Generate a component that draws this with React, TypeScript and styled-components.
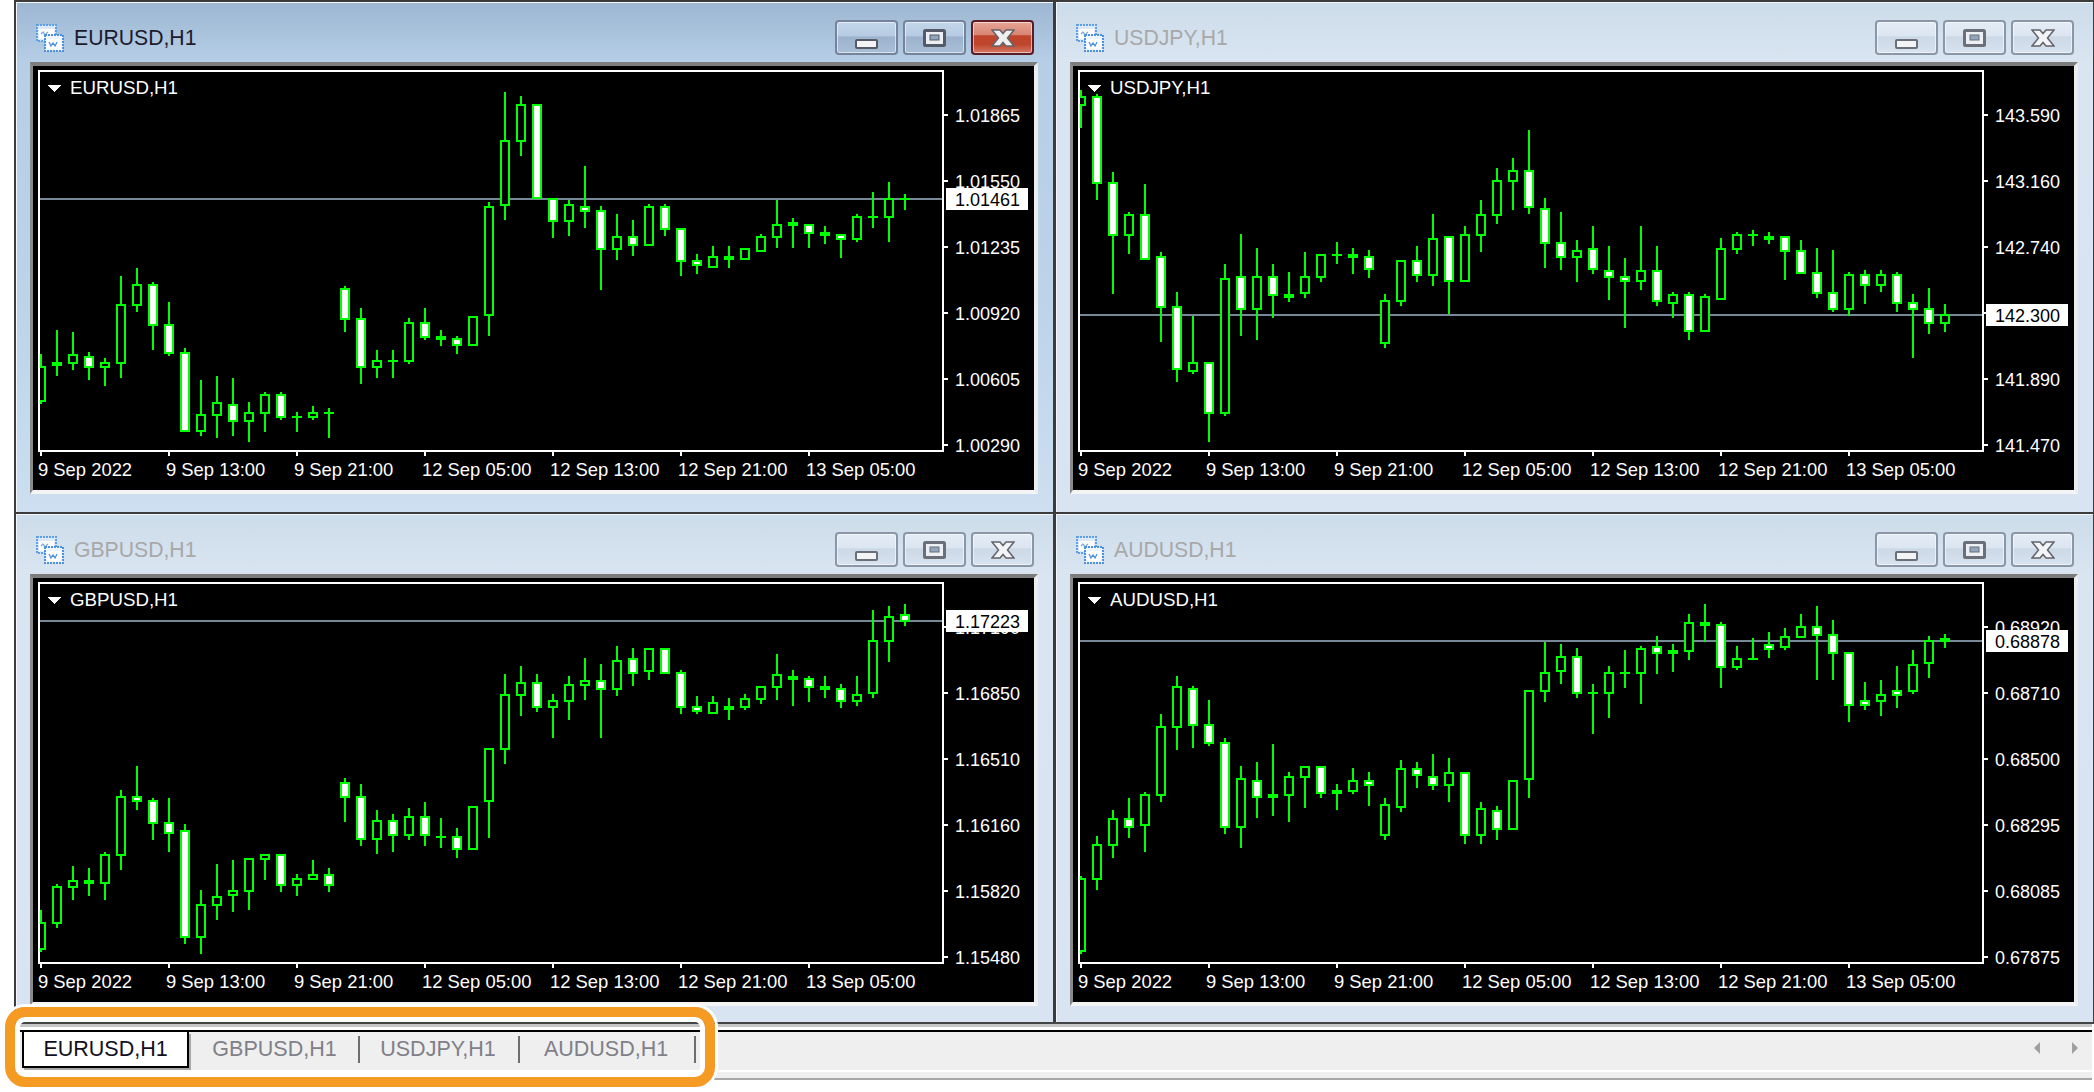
import { FC } from "react";
import styled, { createGlobalStyle } from "styled-components";

const GlobalStyle = createGlobalStyle`
  html, body {
    margin: 0;
    background: #fff;
    overflow: hidden;
  }
`;

// [wick top, body top, body bottom, wick bottom, bearish] in thirds of a pixel
type Candle = number[];

const EURUSD: Candle[] = [
  [882,918,1026,1032,0],[810,906,918,948,0],[816,882,912,930,0],[876,888,924,960,1],[894,906,924,978,0],
  [648,732,912,954,0],[624,672,738,756,0],[666,672,798,870,1],[726,792,882,888,1],[864,876,1116,1116,1],
  [960,1062,1116,1128,0],[948,1026,1068,1134,0],[954,1032,1086,1128,1],[1026,1056,1086,1146,0],[996,1002,1062,1116,0],
  [996,1002,1074,1080,1],[1056,1068,1074,1116,0],[1038,1056,1074,1080,0],[1044,1056,1062,1134,0],[678,684,780,816,1],
  [744,774,924,972,1],[870,900,924,954,0],[870,900,906,954,0],[774,786,906,912,0],[744,786,834,840,1],
  [810,828,840,858,0],[828,834,858,882,1],[768,768,858,858,0],[426,438,768,828,0],[96,240,438,480,0],
  [108,132,246,288,0],[132,132,418,418,1],[414,414,486,534,1],[420,432,486,528,0],[318,438,456,504,1],
  [438,450,570,690,1],[462,528,570,600,0],[480,528,558,588,1],[432,438,558,558,0],[432,438,510,528,1],
  [504,504,606,648,1],[582,600,618,642,1],[558,588,624,624,0],[558,588,600,624,0],[564,564,600,600,0],
  [522,528,576,576,0],[420,492,534,564,0],[474,486,498,564,0],[492,492,522,564,1],[498,516,528,552,0],
  [522,522,540,594,1],[462,468,540,546,0],[396,468,474,504,0],[366,414,474,546,0],[402,414,420,450,0],
];

const USDJPY: Candle[] = [
  [90,108,138,204,0],[102,108,372,420,1],[336,366,528,702,1],[456,462,528,582,0],[372,462,600,600,1],
  [576,588,744,846,1],[696,738,930,966,1],[768,906,936,942,0],[906,906,1062,1146,1],[612,654,1062,1068,0],
  [522,648,750,828,1],[564,648,750,840,0],[612,648,708,774,1],[636,702,714,726,0],[576,648,702,714,0],
  [582,582,654,666,0],[546,582,588,612,0],[564,582,594,642,0],[570,588,630,654,1],[702,720,852,864,0],
  [600,600,726,738,0],[558,600,648,666,1],[462,534,648,678,0],[528,528,666,762,1],[498,522,666,666,0],
  [420,462,528,576,0],[324,360,468,492,0],[294,330,366,450,0],[210,330,444,462,1],[414,444,552,624,1],
  [456,546,594,630,1],[540,570,594,666,0],[498,564,630,642,1],[558,630,654,720,1],[594,648,666,804,1],
  [498,630,666,690,0],[558,630,726,738,1],[696,702,732,774,0],[696,702,816,840,1],[702,708,816,816,0],
  [534,564,720,720,0],[516,522,570,582,0],[510,522,528,558,0],[516,528,540,552,0],[528,528,576,660,1],
  [540,570,642,642,1],[564,636,702,714,1],[570,696,750,756,1],[636,642,750,768,0],[630,642,678,732,1],
  [630,642,678,696,0],[636,642,732,756,1],[702,726,750,894,1],[684,744,792,822,1],[732,762,792,816,0],
];

const GBPUSD: Candle[] = [
  [1020,1056,1140,1146,0],[942,948,1062,1074,0],[888,930,954,990,0],[894,930,942,978,0],[846,852,942,990,0],
  [660,678,858,900,0],[588,678,696,720,1],[684,690,762,810,1],[684,756,792,846,1],[762,780,1104,1122,1],
  [960,1002,1104,1152,0],[882,978,1008,1050,0],[870,960,978,1026,0],[864,864,966,1020,0],[852,852,870,930,0],
  [852,852,948,966,1],[912,924,948,978,0],[870,912,930,930,0],[894,912,948,966,1],[624,636,684,756,1],
  [642,678,810,828,1],[720,750,810,852,0],[732,750,798,846,1],[714,738,798,810,0],[696,738,798,828,1],
  [744,798,804,834,0],[774,798,840,864,1],[708,708,840,840,0],[534,534,696,804,0],[312,372,540,582,0],
  [288,336,378,438,0],[312,336,414,426,1],[372,390,414,504,0],[318,342,396,450,0],[264,330,348,390,0],
  [282,330,360,504,1],[228,270,360,378,0],[234,264,312,348,1],[234,234,306,330,0],[234,234,312,312,1],
  [300,306,414,432,1],[378,408,426,432,1],[378,396,432,432,0],[384,408,420,450,0],[372,384,414,420,0],
  [348,348,390,402,0],[252,312,354,390,0],[300,318,330,408,0],[318,324,354,396,1],[318,348,360,384,0],
  [342,354,396,414,1],[318,372,396,408,0],[120,210,372,384,0],[108,138,216,276,0],[102,132,156,168,1],
];

const AUDUSD: Candle[] = [
  [918,924,1146,1152,0],[798,822,930,960,0],[720,744,828,864,0],[684,744,774,804,1],[666,672,768,846,0],
  [432,468,678,696,0],[318,348,474,540,0],[348,354,468,534,1],[390,462,522,528,1],[504,516,774,792,1],
  [588,624,774,834,0],[576,630,684,744,1],[522,672,684,738,0],[606,618,678,756,0],[588,588,624,714,0],
  [588,588,672,684,1],[642,660,672,720,0],[594,630,666,672,0],[606,630,648,708,1],[684,702,798,810,0],
  [570,594,714,726,0],[576,594,618,654,1],[552,618,648,660,1],[564,606,648,696,0],[606,606,798,822,1],
  [696,714,798,822,0],[708,720,780,810,1],[630,630,780,780,0],[360,360,630,684,0],[216,306,366,396,0],
  [222,258,306,342,0],[234,258,372,384,1],[342,366,372,492,0],[288,306,372,444,0],[240,306,312,354,0],
  [228,234,312,402,0],[198,228,252,312,1],[222,240,252,306,0],[132,156,246,270,0],[102,156,168,216,0],
  [156,162,294,354,1],[228,264,294,300,0],[204,264,270,270,0],[186,222,240,264,1],[174,198,234,240,0],
  [132,168,204,204,0],[108,168,198,330,1],[150,192,252,330,1],[246,246,408,456,1],[336,390,408,420,1],
  [330,372,396,438,0],[288,360,378,414,1],[240,282,366,372,0],[198,210,282,324,0],[192,204,216,234,0],
];

const DATES = ["9 Sep 2022", "9 Sep 13:00", "9 Sep 21:00", "12 Sep 05:00", "12 Sep 13:00", "12 Sep 21:00", "13 Sep 05:00"];
const TICK_Y = [49, 115, 181, 247, 313, 379];

const CHARTS = [
  { symbol: "EURUSD,H1", active: true, candles: EURUSD, shift: -6, bid: "1.01461", bidY: 133,
    prices: ["1.01865", "1.01550", "1.01235", "1.00920", "1.00605", "1.00290"] },
  { symbol: "USDJPY,H1", active: false, candles: USDJPY, shift: -6, bid: "142.300", bidY: 249,
    prices: ["143.590", "143.160", "142.740", "142.300", "141.890", "141.470"] },
  { symbol: "GBPUSD,H1", active: false, candles: GBPUSD, shift: -8, bid: "1.17223", bidY: 43,
    prices: ["1.17190", "1.16850", "1.16510", "1.16160", "1.15820", "1.15480"] },
  { symbol: "AUDUSD,H1", active: false, candles: AUDUSD, shift: -8, bid: "0.68878", bidY: 63,
    prices: ["0.68920", "0.68710", "0.68500", "0.68295", "0.68085", "0.67875"] },
];

const TABS = [
  { label: "EURUSD,H1", width: 167, nudge: 0, active: true },
  { label: "GBPUSD,H1", width: 171, nudge: 0, active: false },
  { label: "USDJPY,H1", width: 160, nudge: 4, active: false },
  { label: "AUDUSD,H1", width: 176, nudge: 4, active: false },
];

const Page = styled.div`
  position: relative;
  width: 2094px;
  height: 1092px;
  box-sizing: border-box;
  padding-left: 14px;
  background: #fff;
  font-family: "Liberation Sans", Arial, sans-serif;
`;

const MdiArea = styled.div`
  display: grid;
  grid-template-columns: 1040px 1040px;
  grid-template-rows: 512px 510px;
  height: 1024px;
  box-sizing: border-box;
  border-bottom: 2px solid #444;
`;

const ChildWindow = styled.section<{ $active: boolean }>`
  display: flex;
  flex-direction: column;
  box-sizing: border-box;
  border: solid #3c3c3c;
  border-width: 2px 1px 0 2px;
  box-shadow: inset 1px 1px 0 #f4f8fc;
  background: ${(p) =>
    p.$active
      ? "linear-gradient(180deg, #9db7d2 0, #b6cee6 60px, #bcd3ea 300px, #cddff0 510px)"
      : "linear-gradient(180deg, #cddcea 0, #d9e5f1 60px, #d8e4f1 100%)"};
`;

const TitleBar = styled.header`
  display: flex;
  align-items: center;
  box-sizing: border-box;
  height: 60px;
  flex: none;
  padding: 11px 19px 0 19px;
`;

const AppIcon = styled.svg`
  width: 30px;
  height: 30px;
  flex: none;
  margin-right: 9px;
`;

const TitleText = styled.h2<{ $active: boolean }>`
  flex: 1;
  margin: 0;
  font-size: 21.200px;
  font-weight: 400;
  color: ${(p) => (p.$active ? "#1d1a2c" : "#a8a8a8")};
`;

const CaptionButtons = styled.div`
  display: flex;
  gap: 5px;
`;

const CaptionButton = styled.button<{ $active: boolean; $close?: boolean }>`
  display: flex;
  align-items: center;
  justify-content: center;
  width: 63px;
  height: 35px;
  padding: 0;
  border-radius: 4px;
  border: 2px solid ${(p) => (p.$close && p.$active ? "#5c1c26" : p.$active ? "#75849a" : "#8b97a6")};
  box-shadow: inset 0 0 0 1px rgba(255, 255, 255, 0.55);
  background: ${(p) => {
    if (p.$close && p.$active) {
      return "linear-gradient(180deg, #e6a595 0, #d98473 42%, #bf452d 44%, #bf452d 72%, #d47a68 100%)";
    }
    if (p.$active) {
      return "linear-gradient(180deg, #c3d6ea 0, #b6cbe2 45%, #9db3cd 48%, #a9bfd8 100%)";
    }
    return "linear-gradient(180deg, #e4ecf5 0, #dce6f1 45%, #cbd8e6 48%, #d8e3ef 100%)";
  }};
`;

const CaptionGlyph = styled.svg`
  display: block;
`;

const SunkenFrame = styled.div`
  box-sizing: border-box;
  width: 1008px;
  height: 432px;
  margin-left: 14px;
  flex: none;
  border-style: solid;
  border-width: 4px 4px 4px 3px;
  border-color: #7d7d7d #ededed #f4f4f4 #8a8a8a;
`;

const ChartSvg = styled.svg`
  display: block;
  background: #000;
  shape-rendering: crispEdges;

  text {
    font-family: "Liberation Sans", Arial, sans-serif;
    font-size: 18px;
    fill: #fff;
  }
  text.symbol {
    font-size: 18.700px;
  }
  text.date {
    font-size: 18.400px;
  }
  text.bid {
    fill: #000;
  }
`;

const TabArea = styled.div`
  border-top: 3px solid #c6c6c6;
  padding-top: 3px;
  width: 2078px;
`;

const TabStrip = styled.nav`
  display: flex;
  align-items: flex-start;
  height: 38px;
  padding-left: 8px;
  border-top: 2px solid #000;
  border-bottom: 2px solid #fff;
  background: #efefef;
`;

const Tab = styled.div<{ $active: boolean; $width: number; $nudge: number }>`
  position: relative;
  box-sizing: border-box;
  flex: none;
  width: ${(p) => p.$width}px;
  height: 36px;
  padding: 4px ${(p) => p.$nudge}px 0 0;
  text-align: center;
  font-size: 21.500px;
  line-height: 26px;
  color: ${(p) => (p.$active ? "#12101e" : "#7f8088")};
  ${(p) =>
    p.$active
      ? "background: #fff; border: solid #000; border-width: 0 2px 2px 2px; box-shadow: 2px 2px 0 #a8a8a8;"
      : `&::after {
          content: "";
          position: absolute;
          right: 0;
          top: 4px;
          width: 2px;
          height: 27px;
          background: #6e6e6e;
        }`}
`;

const ScrollArrows = styled.div`
  display: flex;
  gap: 32px;
  margin-left: auto;
  margin-right: 14px;
  padding-top: 10px;
`;

const StripFoot = styled.div`
  height: 6px;
  background: #efefef;
  border-bottom: 2px solid #a6a6a6;
`;

const Highlight = styled.div`
  position: absolute;
  left: 5px;
  top: 1007px;
  box-sizing: border-box;
  width: 710px;
  height: 80px;
  border: 10px solid #f59a23;
  border-radius: 20px;
  box-shadow: 0 0 0 3px #fff, inset 0 0 0 5px #fff;
  pointer-events: none;
`;

const WindowIcon: FC = () => (
  <AppIcon viewBox="0 0 30 30">
    <rect x="2" y="2" width="19" height="16" fill="#dbe9fb" stroke="#5f9fe8" strokeWidth="2" strokeDasharray="2 1" />
    <rect x="4" y="6" width="15" height="10" fill="#fff" />
    <path d="M6 11l2-2 2 3 3-3" fill="none" stroke="#7aa6d8" strokeWidth="1.2" />
    <rect x="10" y="12" width="18" height="16" fill="#eef5fe" stroke="#4d8fe0" strokeWidth="2" strokeDasharray="2 1" />
    <rect x="12" y="16" width="14" height="10" fill="#fff" />
    <path d="M14 19l2 4 2-3 2 3 2-4" fill="none" stroke="#4d8fe0" strokeWidth="1.3" />
  </AppIcon>
);

const MinimizeGlyph: FC<{ color: string }> = ({ color }) => (
  <CaptionGlyph width="23" height="10" viewBox="0 0 23 10" style={{ marginTop: 13 }}>
    <rect x="1" y="1" width="21" height="8" rx="1" fill="#f4f4f4" stroke={color} strokeWidth="2" />
  </CaptionGlyph>
);

const MaximizeGlyph: FC<{ color: string }> = ({ color }) => (
  <CaptionGlyph width="23" height="18" viewBox="0 0 23 18">
    <rect x="1.500" y="1.500" width="20" height="15" rx="1" fill="#eceff3" stroke={color} strokeWidth="3" />
    <rect x="7" y="6" width="9" height="5" fill="#8fa6c0" stroke={color} strokeWidth="1" />
  </CaptionGlyph>
);

const CloseGlyph: FC<{ active: boolean }> = ({ active }) => (
  <CaptionGlyph width="24" height="18" viewBox="0 0 24 18">
    <path
      d="M1 1h8l3 3.500L15 1h8l-6.500 8 6.500 8h-8l-3-3.500L9 17H1l6.500-8z"
      fill={active ? "#efefef" : "#f2f4f6"}
      stroke="#62646a"
      strokeWidth="1.500"
    />
  </CaptionGlyph>
);

const CandleMark: FC<{ candle: Candle; index: number; shift: number }> = ({ candle, index, shift }) => {
  const [high, top, bottom, low, bearish] = candle;
  const cx = 8 + 16 * index;
  const y = (v: number) => Math.round(v / 3) + shift;
  const height = y(bottom) - y(top);
  return (
    <g>
      <rect x={cx - 1} y={y(high)} width={2} height={y(low) - y(high)} fill="#00ff00" />
      <rect x={cx - 5} y={y(top)} width={10} height={height} fill="#00ff00" />
      {height > 4 && (
        <rect x={cx - 3} y={y(top) + 2} width={6} height={height - 4} fill={bearish ? "#fff" : "#000"} />
      )}
    </g>
  );
};

const Chart: FC<{ chart: (typeof CHARTS)[number] }> = ({ chart }) => {
  const clipId = `plot-${chart.symbol.slice(0, 6)}`;
  return (
    <ChartSvg width="1001" height="424" viewBox="0 0 1001 424">
      <defs>
        <clipPath id={clipId}>
          <rect x="7" y="6" width="902" height="378" />
        </clipPath>
      </defs>

      <rect x="7" y={chart.bidY - 1} width="902" height="2" fill="#778899" />
      <g clipPath={`url(#${clipId})`}>
        {chart.candles.map((c, i) => (
          <CandleMark key={i} candle={c} index={i} shift={chart.shift} />
        ))}
      </g>
      <rect x="6" y="5" width="904" height="380" fill="none" stroke="#fff" strokeWidth="2" />

      <polygon points="14,19 28,19 21,26" fill="#fff" />
      <text className="symbol" x="37" y="28">{chart.symbol}</text>

      {TICK_Y.map((y, i) => (
        <g key={y}>
          <rect x="911" y={y - 1} width="4" height="2" fill="#fff" />
          <text x="922" y={y + 7}>{chart.prices[i]}</text>
        </g>
      ))}
      {DATES.map((d, i) => (
        <g key={d}>
          <rect x={7 + 128 * i} y="386" width="2" height="4" fill="#fff" />
          <text className="date" x={5 + 128 * i} y="410">{d}</text>
        </g>
      ))}

      <rect x="913" y={chart.bidY - 11} width="82" height="22" fill="#fff" />
      <text className="bid" x="922" y={chart.bidY + 7}>{chart.bid}</text>
    </ChartSvg>
  );
};

const ChartWindow: FC<{ chart: (typeof CHARTS)[number] }> = ({ chart }) => {
  const glyphColor = chart.active ? "#555b66" : "#6a6f78";
  return (
    <ChildWindow $active={chart.active}>
      <TitleBar>
        <WindowIcon />
        <TitleText $active={chart.active}>{chart.symbol}</TitleText>
        <CaptionButtons>
          <CaptionButton $active={chart.active}><MinimizeGlyph color={glyphColor} /></CaptionButton>
          <CaptionButton $active={chart.active}><MaximizeGlyph color={glyphColor} /></CaptionButton>
          <CaptionButton $active={chart.active} $close><CloseGlyph active={chart.active} /></CaptionButton>
        </CaptionButtons>
      </TitleBar>
      <SunkenFrame>
        <Chart chart={chart} />
      </SunkenFrame>
    </ChildWindow>
  );
};

export default function App() {
  return (
    <Page>
      <GlobalStyle />
      <MdiArea>
        {CHARTS.map((chart) => (
          <ChartWindow key={chart.symbol} chart={chart} />
        ))}
      </MdiArea>
      <TabArea>
        <TabStrip>
          {TABS.map((tab) => (
            <Tab key={tab.label} $active={tab.active} $width={tab.width} $nudge={tab.nudge}>{tab.label}</Tab>
          ))}
          <ScrollArrows>
            <svg width="6" height="12" viewBox="0 0 6 12"><path d="M6 0v12L0 6z" fill="#a0a0a0" /></svg>
            <svg width="6" height="12" viewBox="0 0 6 12"><path d="M0 0v12l6-6z" fill="#a0a0a0" /></svg>
          </ScrollArrows>
        </TabStrip>
        <StripFoot />
      </TabArea>
      <Highlight />
    </Page>
  );
}
